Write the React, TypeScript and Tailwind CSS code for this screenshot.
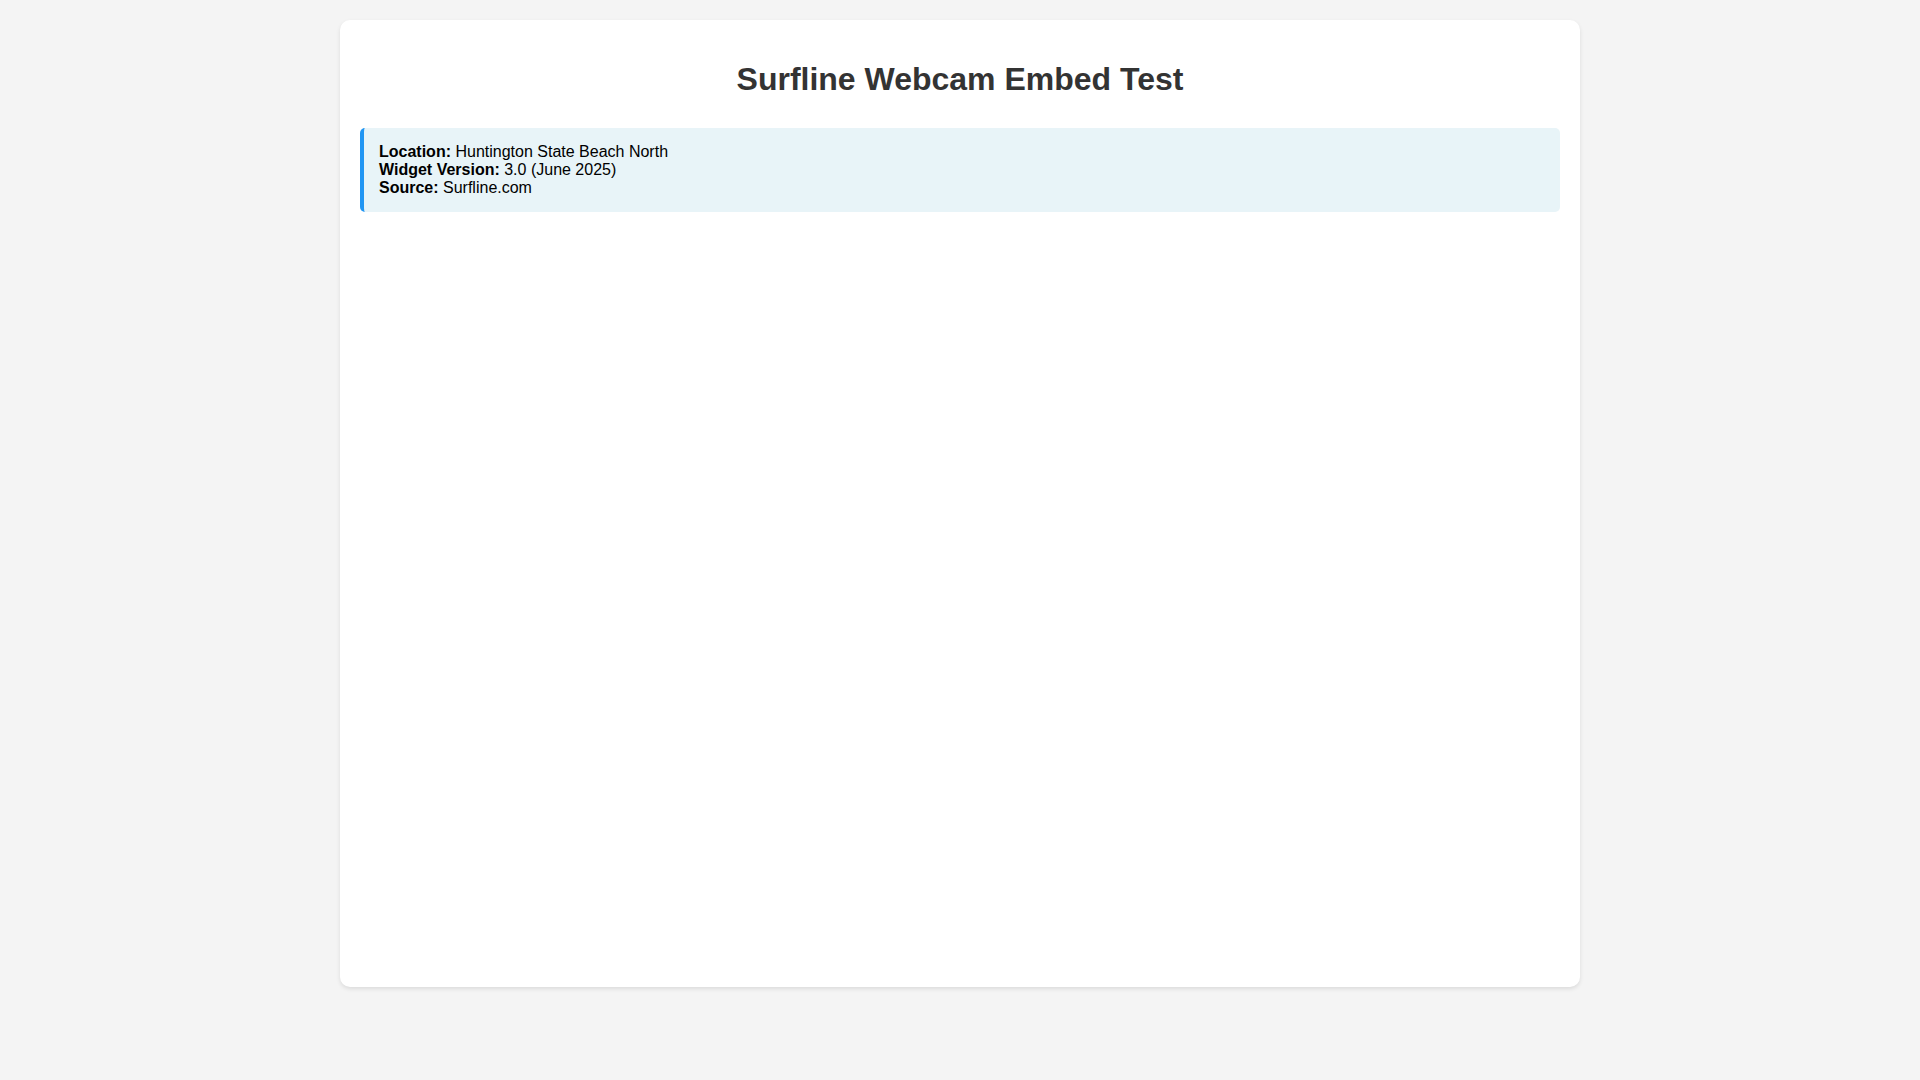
export default function App() {
  return (
    <div className="min-h-screen bg-[#f4f4f4] p-5" style={{ fontFamily: '"Liberation Sans", Arial, sans-serif' }}>
      <div className="mx-auto max-w-[1240px] rounded-[10px] bg-white p-5 shadow-[0_2px_4px_rgba(0,0,0,0.1)]">
        <h1 className="mt-[21px] mb-[30px] text-center text-[32px] font-bold leading-[37px] text-[#333]">
          Surfline Webcam Embed Test
        </h1>
        <div className="rounded-[5px] border-l-4 border-[#2196f3] bg-[#e8f4f8] px-[15px] py-[15px] text-[16px] leading-[18px] text-black">
          <div>
            <strong>Location:</strong> Huntington State Beach North
          </div>
          <div>
            <strong>Widget Version:</strong> 3.0 (June 2025)
          </div>
          <div>
            <strong>Source:</strong> Surfline.com
          </div>
        </div>
        <div className="h-[755px]" />
      </div>
    </div>
  );
}
